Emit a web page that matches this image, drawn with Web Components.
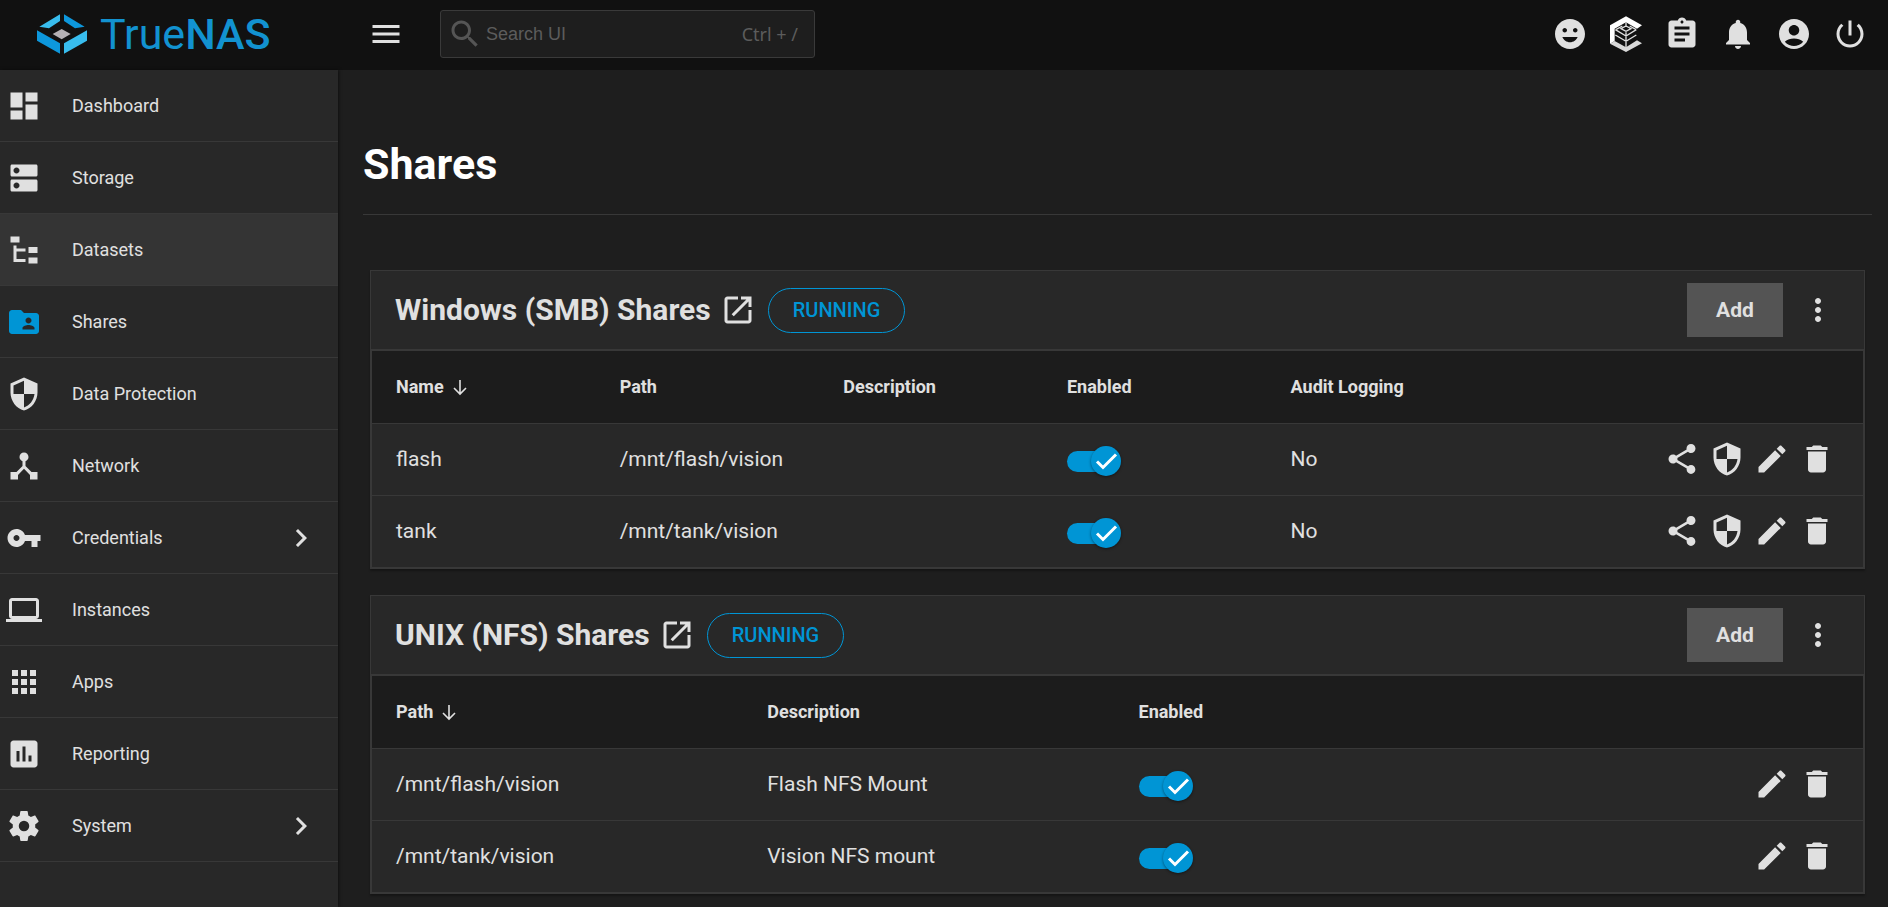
<!DOCTYPE html>
<html lang="en">
<head>
<meta charset="utf-8">
<meta name="viewport" content="width=device-width, initial-scale=1">
<title>TrueNAS - Shares</title>
<style>
  :root {
    --bg: #1e1e1e;
    --bg-dark: #111111;
    --panel: #282828;
    --line: #383838;
    --fg: #e0e0e0;
    --primary: #0095d5;
  }
  body {
    margin: 0;
    background: var(--bg);
    color: var(--fg);
    font-family: Roboto, "Noto Sans", sans-serif;
  }
</style>
</head>
<body>
<nas-app>
  <nas-topbar slot="top"></nas-topbar>
  <nas-sidebar slot="side">
    <nas-nav-item icon="dashboard">Dashboard</nas-nav-item>
    <nas-nav-item icon="storage">Storage</nas-nav-item>
    <nas-nav-item icon="tree" highlighted>Datasets</nas-nav-item>
    <nas-nav-item icon="shares" active>Shares</nas-nav-item>
    <nas-nav-item icon="shield">Data Protection</nas-nav-item>
    <nas-nav-item icon="network">Network</nas-nav-item>
    <nas-nav-item icon="key" expandable>Credentials</nas-nav-item>
    <nas-nav-item icon="laptop">Instances</nas-nav-item>
    <nas-nav-item icon="apps">Apps</nas-nav-item>
    <nas-nav-item icon="report">Reporting</nas-nav-item>
    <nas-nav-item icon="gear" expandable>System</nas-nav-item>
  </nas-sidebar>
  <nas-page-header>Shares</nas-page-header>
  <nas-share-card status="RUNNING">
    <span slot="heading">Windows (SMB) Shares</span>
    <nas-share-table kind="smb"></nas-share-table>
  </nas-share-card>
  <nas-share-card status="RUNNING">
    <span slot="heading">UNIX (NFS) Shares</span>
    <nas-share-table kind="nfs"></nas-share-table>
  </nas-share-card>
</nas-app>

<script>
const ICONS = {
  menu: 'M3 18h18v-2H3v2zm0-5h18v-2H3v2zm0-7v2h18V6H3z',
  search: 'M15.5 14h-.79l-.28-.27C15.41 12.59 16 11.11 16 9.5 16 5.91 13.09 3 9.5 3S3 5.91 3 9.5 5.91 16 9.5 16c1.61 0 3.09-.59 4.23-1.57l.27.28v.79l5 4.99L20.49 19l-4.99-5zm-6 0C7.01 14 5 11.99 5 9.5S7.01 5 9.5 5 14 7.01 14 9.5 11.99 14 9.5 14z',
  smile: 'M12 2C6.47 2 2 6.47 2 12s4.47 10 10 10 10-4.48 10-10S17.52 2 12 2zm3.5 6c.83 0 1.5.67 1.5 1.5s-.67 1.5-1.5 1.5-1.5-.67-1.5-1.5.67-1.5 1.5-1.5zm-7 0c.83 0 1.5.67 1.5 1.5S9.33 11 8.5 11 7 10.33 7 9.5 7.67 8 8.5 8zm3.5 9.5c-2.33 0-4.31-1.46-5.11-3.5h10.22c-.8 2.04-2.78 3.5-5.11 3.5z',
  clipboard: 'M19 3h-4.18C14.4 1.84 13.3 1 12 1c-1.3 0-2.4.84-2.82 2H5c-1.1 0-2 .9-2 2v14c0 1.1.9 2 2 2h14c1.1 0 2-.9 2-2V5c0-1.1-.9-2-2-2zm-7 0c.55 0 1 .45 1 1s-.45 1-1 1-1-.45-1-1 .45-1 1-1zm2 14H7v-2h7v2zm3-4H7v-2h10v2zm0-4H7V7h10v2z',
  bell: 'M12 22c1.1 0 2-.9 2-2h-4c0 1.1.89 2 2 2zm6-6v-5c0-3.07-1.64-5.64-4.5-6.32V4c0-.83-.67-1.5-1.5-1.5s-1.5.67-1.5 1.5v.68C7.63 5.36 6 7.92 6 11v5l-2 2v1h16v-1l-2-2z',
  account: 'M12 2C6.48 2 2 6.48 2 12s4.48 10 10 10 10-4.48 10-10S17.52 2 12 2zm0 4c1.93 0 3.5 1.57 3.5 3.5S13.93 13 12 13s-3.5-1.57-3.5-3.5S10.07 6 12 6zm0 14c-2.03 0-4.43-.82-6.14-2.88C7.55 15.8 9.68 15 12 15s4.45.8 6.14 2.12C16.43 19.18 14.03 20 12 20z',
  power: 'M13 3h-2v10h2V3zm4.83 2.17l-1.42 1.42C17.99 7.86 19 9.81 19 12c0 3.87-3.13 7-7 7s-7-3.13-7-7c0-2.19 1.01-4.14 2.58-5.42L6.17 5.17C4.23 6.82 3 9.26 3 12c0 4.97 4.03 9 9 9s9-4.03 9-9c0-2.74-1.23-5.18-3.17-6.83z',
  dashboard: 'M3 13h8V3H3v10zm0 8h8v-6H3v6zm10 0h8V11h-8v10zm0-18v6h8V3h-8z',
  storage: 'M20 13H4c-.55 0-1 .45-1 1v6c0 .55.45 1 1 1h16c.55 0 1-.45 1-1v-6c0-.55-.45-1-1-1zM7 19c-1.1 0-2-.9-2-2s.9-2 2-2 2 .9 2 2-.9 2-2 2zM20 3H4c-.55 0-1 .45-1 1v6c0 .55.45 1 1 1h16c.55 0 1-.45 1-1V4c0-.55-.45-1-1-1zM7 9c-1.1 0-2-.9-2-2s.9-2 2-2 2 .9 2 2-.9 2-2 2z',
  tree: 'M3 3h6v4H3zM15 10h6v4h-6zM15 17h6v4h-6zM13 13H7v5h6v2H5V9h2v2h6z',
  shares: 'M20 6h-8l-2-2H4c-1.1 0-1.99.9-1.99 2L2 18c0 1.1.9 2 2 2h16c1.1 0 2-.9 2-2V8c0-1.1-.9-2-2-2zm-5 3c1.1 0 2 .9 2 2s-.9 2-2 2-2-.9-2-2 .9-2 2-2zm4 8h-8v-1c0-1.33 2.67-2 4-2s4 .67 4 2v1z',
  shield: 'M12 1L3 5v6c0 5.55 3.84 10.74 9 12 5.16-1.26 9-6.45 9-12V5l-9-4zm0 10.99h7c-.53 4.12-3.28 7.79-7 8.94V12H5V6.3l7-3.11v8.8z',
  network: 'M17 16l-4-4V8.82C14.16 8.4 15 7.3 15 6c0-1.66-1.34-3-3-3S9 4.34 9 6c0 1.3.84 2.4 2 2.82V12l-4 4H3v5h5v-3.05l4-4.2 4 4.2V21h5v-5h-4z',
  key: 'M12.65 10C11.83 7.67 9.61 6 7 6c-3.31 0-6 2.69-6 6s2.69 6 6 6c2.61 0 4.83-1.67 5.65-4H17v4h4v-4h2v-4H12.65zM7 14c-1.1 0-2-.9-2-2s.9-2 2-2 2 .9 2 2-.9 2-2 2z',
  laptop: 'M20 18c1.1 0 1.99-.9 1.99-2L22 6c0-1.1-.9-2-2-2H4c-1.1 0-2 .9-2 2v10c0 1.1.9 2 2 2H0v2h24v-2h-4zM4 6h16v10H4V6z',
  apps: 'M4 8h4V4H4v4zm6 12h4v-4h-4v4zm-6 0h4v-4H4v4zm0-6h4v-4H4v4zm6 0h4v-4h-4v4zm6-10v4h4V4h-4zm-6 4h4V4h-4v4zm6 6h4v-4h-4v4zm0 6h4v-4h-4v4z',
  report: 'M19 3H5c-1.1 0-2 .9-2 2v14c0 1.1.9 2 2 2h14c1.1 0 2-.9 2-2V5c0-1.1-.9-2-2-2zM9 17H7v-7h2v7zm4 0h-2V7h2v10zm4 0h-2v-4h2v4z',
  gear: 'M12 15.5A3.5 3.5 0 0 1 8.5 12 3.5 3.5 0 0 1 12 8.5a3.5 3.5 0 0 1 3.5 3.5 3.5 3.5 0 0 1-3.5 3.5m7.43-2.53c.04-.32.07-.64.07-.97s-.03-.66-.07-1l2.11-1.63c.19-.15.24-.42.12-.64l-2-3.46c-.12-.22-.39-.31-.61-.22l-2.49 1c-.52-.39-1.06-.73-1.69-.98l-.37-2.65A.506.506 0 0 0 14 2h-4c-.25 0-.46.18-.5.42l-.37 2.65c-.63.25-1.17.59-1.69.98l-2.49-1c-.22-.09-.49 0-.61.22l-2 3.46c-.13.22-.07.49.12.64L4.57 11c-.04.34-.07.67-.07 1s.03.65.07.97l-2.11 1.66c-.19.15-.25.42-.12.64l2 3.46c.12.22.39.3.61.22l2.49-1.01c.52.4 1.06.74 1.69.99l.37 2.65c.04.24.25.42.5.42h4c.25 0 .46-.18.5-.42l.37-2.65c.63-.26 1.17-.59 1.69-.99l2.49 1.01c.22.08.49 0 .61-.22l2-3.46c.12-.22.07-.49-.12-.64l-2.11-1.66z',
  chevron: 'M10 6L8.59 7.41 13.17 12l-4.58 4.59L10 18l6-6z',
  open: 'M19 19H5V5h7V3H5c-1.11 0-2 .9-2 2v14c0 1.1.89 2 2 2h14c1.1 0 2-.9 2-2v-7h-2v7zM14 3v2h3.59l-9.83 9.83 1.41 1.41L19 6.41V10h2V3h-7z',
  kebab: 'M12 8c1.1 0 2-.9 2-2s-.9-2-2-2-2 .9-2 2 .9 2 2 2zm0 2c-1.1 0-2 .9-2 2s.9 2 2 2 2-.9 2-2-.9-2-2-2zm0 6c-1.1 0-2 .9-2 2s.9 2 2 2 2-.9 2-2-.9-2-2-2z',
  share: 'M18 16.08c-.76 0-1.44.3-1.96.77L8.91 12.7c.05-.23.09-.46.09-.7s-.04-.47-.09-.7l7.05-4.11c.54.5 1.25.81 2.04.81 1.66 0 3-1.34 3-3s-1.34-3-3-3-3 1.34-3 3c0 .24.04.47.09.7L8.04 9.81C7.5 9.31 6.79 9 6 9c-1.66 0-3 1.34-3 3s1.34 3 3 3c.79 0 1.5-.31 2.04-.81l7.12 4.16c-.05.21-.08.43-.08.65 0 1.61 1.31 2.92 2.92 2.92s2.92-1.31 2.92-2.92-1.31-2.92-2.92-2.92z',
  edit: 'M3 17.25V21h3.75L17.81 9.94l-3.75-3.75L3 17.25zM20.71 7.04c.39-.39.39-1.02 0-1.41l-2.34-2.34c-.39-.39-1.02-.39-1.41 0l-1.83 1.83 3.75 3.75 1.83-1.83z',
  trash: 'M6 19c0 1.1.9 2 2 2h8c1.1 0 2-.9 2-2V7H6v12zM19 4h-3.5l-1-1h-5l-1 1H5v2h14V4z'
};

/* Attaches an open shadow root holding the given markup. */
function render(el, html) {
  const t = document.createElement('template');
  t.innerHTML = html;
  el.attachShadow({ mode: 'open' }).append(t.content.cloneNode(true));
}

class NasIcon extends HTMLElement {
  connectedCallback() {
    if (this.shadowRoot) return;
    render(this, `<style>
      :host { display: block; width: 36px; height: 36px; flex: none; }
      svg { display: block; width: 100%; height: 100%; fill: currentColor; }
    </style><svg viewBox="0 0 24 24" aria-hidden="true"><path d="${ICONS[this.getAttribute('name')]}"/></svg>`);
  }
}

class NasApp extends HTMLElement {
  connectedCallback() {
    render(this, `<style>
      :host { display: grid; grid-template-columns: 338px minmax(0, 1fr); grid-template-rows: auto 1fr; min-height: 100vh; }
      header { grid-column: 1 / -1; }
      aside { background: var(--panel); box-shadow: 1px 0 3px rgba(0, 0, 0, .5); }
      main { padding: 0 16px 12px 25px; display: flex; flex-direction: column; gap: 26px; }
    </style>
    <header><slot name="top"></slot></header>
    <aside><slot name="side"></slot></aside>
    <main><slot></slot></main>`);
  }
}

class NasLogo extends HTMLElement {
  connectedCallback() {
    render(this, `<style>
      :host { display: block; }
      a { display: flex; align-items: center; gap: 12px; color: #1292d0; text-decoration: none; font-size: 43px; line-height: 48px; font-weight: 400; }
      b { font-weight: 500; }
      svg { display: block; width: 52px; height: 42px; }
    </style>
    <a href="#dashboard">
      <svg viewBox="108 38 156 126" aria-hidden="true">
        <path fill="#38bdee" d="M180 42V62L147 84 118 79ZM261 90V121L192 160V129Z"/>
        <path fill="#0d97dc" d="M192 42L254 79 225 84 192 62ZM111 90L180 129V160L111 121Z"/>
        <path fill="#b5b1b4" d="M158 101L185 86 212 101 185 117Z"/>
      </svg>
      <span>True<b>NAS</b></span>
    </a>`);
  }
}

class NasTopbar extends HTMLElement {
  connectedCallback() {
    const btn = (name, label) => `<button type="button" aria-label="${label}"><nas-icon name="${name}"></nas-icon></button>`;
    render(this, `<style>
      :host { display: flex; align-items: center; box-sizing: border-box; height: 70px; background: var(--bg-dark); padding: 0 10px 2px 0; }
      nas-logo { width: 303px; padding-left: 36px; }
      button { display: grid; place-items: center; width: 56px; height: 56px; padding: 0; border: 0; background: none; color: var(--fg); }
      .menu { width: 94px; }
      .search { display: flex; align-items: center; box-sizing: border-box; width: 375px; height: 48px; margin-left: 7px; padding: 0 16px 0 6px; border: 1px solid #3a3a3a; border-radius: 3px; background: var(--bg); color: #555; }
      input { flex: 1; min-width: 0; margin-left: 3px; padding: 0; border: 0; outline: 0; background: none; color: var(--fg); font: 18px/24px "Liberation Sans", sans-serif; }
      input::placeholder { color: #5c5c5c; opacity: 1; }
      kbd { color: #5c5c5c; font: 18px/24px "Noto Sans", sans-serif; }
      .actions { display: flex; margin-left: auto; }
      .brand { width: 36px; height: 40px; display: block; }
    </style>
    <nas-logo></nas-logo>
    <button type="button" class="menu" aria-label="Toggle navigation"><nas-icon name="menu"></nas-icon></button>
    <label class="search"><nas-icon name="search"></nas-icon><input type="text" placeholder="Search UI" aria-label="Search UI"><kbd>Ctrl + /</kbd></label>
    <div class="actions">
      ${btn('smile', 'Feedback')}
      <button type="button" aria-label="TrueCommand">
        <svg class="brand" viewBox="9 29 108 120" aria-hidden="true">
          <path fill="#fff" d="M63 36L111 63 96 73 63 54 29 73V110L15 118V63Z"/>
          <path fill="#d8d8d8" d="M15 118L29 110 63 129 96 108 111 117 63 143Z"/>
          <path fill="none" stroke="#e0e0e0" stroke-width="4" d="M63 54V68M63 84V130M34 75L52 65M74 65L92 75M48 73L63 65 78 73 63 81ZM31 76L63 95 94 76M31 92L63 111 94 92"/>
        </svg>
      </button>
      ${btn('clipboard', 'Jobs')}${btn('bell', 'Alerts')}${btn('account', 'Account')}${btn('power', 'Power')}
    </div>`);
  }
}

class NasSidebar extends HTMLElement {
  connectedCallback() {
    render(this, `<style>:host { display: block; } nav { display: flex; flex-direction: column; }</style><nav aria-label="Main"><slot></slot></nav>`);
  }
}

class NasNavItem extends HTMLElement {
  connectedCallback() {
    render(this, `<style>
      :host { display: block; }
      a { display: flex; align-items: center; gap: 30px; box-sizing: border-box; height: 72px; padding: 0 19px 0 6px; border-bottom: 1px solid var(--line); color: var(--fg); text-decoration: none; font-size: 18px; line-height: 24px; }
      :host([highlighted]) a { background: #343434; }
      :host([active]) .lead { color: var(--primary); }
      .more { margin-left: auto; }
    </style>
    <a href="#${this.getAttribute('icon')}"><nas-icon class="lead" name="${this.getAttribute('icon')}"></nas-icon><span><slot></slot></span>${this.hasAttribute('expandable') ? '<nas-icon class="more" name="chevron"></nas-icon>' : ''}</a>`);
  }
}

class NasPageHeader extends HTMLElement {
  connectedCallback() {
    render(this, `<style>
      :host { display: block; padding: 70px 0 26px; margin-bottom: 29px; border-bottom: 1px solid var(--line); }
      h1 { margin: 0; color: #fff; font-size: 43px; line-height: 48px; font-weight: 700; }
    </style><h1><slot></slot></h1>`);
  }
}

class NasShareCard extends HTMLElement {
  connectedCallback() {
    render(this, `<style>
      :host { display: block; margin: 0 7px; border: 1px solid var(--line); background: var(--panel); box-shadow: 0 2px 2px rgba(0, 0, 0, .3); }
      header { display: flex; align-items: center; height: 78px; padding: 0 19px 0 24px; border-bottom: 1px solid var(--line); }
      h2 { margin: 0; font-size: 30px; line-height: 36px; font-weight: 700; }
      a { display: flex; align-items: center; gap: 9px; color: inherit; text-decoration: none; }
      .status { box-sizing: border-box; height: 45px; margin-left: 12px; padding: 0 24px; border: 1px solid var(--primary); border-radius: 24px; color: var(--primary); font-size: 20px; line-height: 43px; font-weight: 500; }
      .buttons { display: flex; gap: 8px; margin-left: auto; }
      button { display: grid; place-items: center; height: 54px; padding: 0; border: 0; color: var(--fg); background: none; font: 700 21px/24px Roboto, sans-serif; }
      .add { width: 96px; background: #545454; }
      .more { width: 54px; }
    </style>
    <header>
      <h2><a href="#share"><slot name="heading"></slot><nas-icon name="open"></nas-icon></a></h2>
      <span class="status">${this.getAttribute('status')}</span>
      <div class="buttons">
        <button type="button" class="add">Add</button>
        <button type="button" class="more" aria-label="More options"><nas-icon name="kebab"></nas-icon></button>
      </div>
    </header>
    <slot></slot>`);
  }
}

class NasToggle extends HTMLElement {
  connectedCallback() {
    render(this, `<style>
      :host { display: block; padding-top: 5px; }
      label { display: grid; width: 54px; height: 30px; align-items: center; }
      input { grid-area: 1 / 1; appearance: none; width: 52px; height: 21px; margin: 0; border-radius: 11px; background: #555; }
      input:checked { background: var(--primary); }
      svg { grid-area: 1 / 1; justify-self: end; width: 30px; height: 30px; border-radius: 50%; background: var(--primary); box-shadow: 0 1px 3px rgba(0, 0, 0, .45); z-index: 1; }
    </style>
    <label><input type="checkbox" checked aria-label="Enabled"><svg viewBox="0 0 30 30" aria-hidden="true"><path d="M6 15.500L12 21.500 25 8.500" fill="none" stroke="#fff" stroke-width="3"/></svg></label>`);
  }
}

const SHARES = {
  smb: {
    width: '15%',
    columns: ['Name', 'Path', 'Description', 'Enabled', 'Audit Logging'],
    rows: [['flash', '/mnt/flash/vision', '', true, 'No'], ['tank', '/mnt/tank/vision', '', true, 'No']],
    actions: [['share', 'Share ACL'], ['shield', 'Filesystem ACL'], ['edit', 'Edit'], ['trash', 'Delete']]
  },
  nfs: {
    width: '24.9%',
    columns: ['Path', 'Description', 'Enabled'],
    rows: [['/mnt/flash/vision', 'Flash NFS Mount', true], ['/mnt/tank/vision', 'Vision NFS mount', true]],
    actions: [['edit', 'Edit'], ['trash', 'Delete']]
  }
};

class NasShareTable extends HTMLElement {
  connectedCallback() {
    const d = SHARES[this.getAttribute('kind')];
    const arrow = '<svg viewBox="0 0 16 18" aria-hidden="true"><path d="M8 2V16M2 10L8 16 14 10" fill="none" stroke="currentColor" stroke-width="1.600"/></svg>';
    const head = d.columns.map((c, i) => `<th scope="col">${i ? c : `<span class="sort">${c}${arrow}</span>`}</th>`).join('');
    const acts = d.actions.map(([n, l]) => `<button type="button" aria-label="${l}"><nas-icon name="${n}"></nas-icon></button>`).join('');
    const body = d.rows.map(r => `<tr>${r.map(c => `<td>${c === true ? '<nas-toggle></nas-toggle>' : c}</td>`).join('')}<td><div class="actions">${acts}</div></td></tr>`).join('');
    render(this, `<style>
      :host { display: block; border: 1px solid var(--line); }
      table { width: 100%; table-layout: fixed; border-collapse: separate; border-spacing: 0; }
      col.data { width: ${d.width}; }
      th, td { box-sizing: border-box; height: 72px; padding: 0 0 2px 24px; text-align: left; vertical-align: middle; border-bottom: 1px solid var(--line); }
      th { height: 73px; padding-bottom: 0; background: #1c1c1c; font-size: 18px; line-height: 24px; font-weight: 700; }
      td { font-size: 21px; line-height: 24px; }
      tbody tr:last-child td { height: 71px; border-bottom: 0; }
      .sort { display: flex; align-items: center; gap: 8px; }
      .sort svg { width: 16px; height: 18px; }
      .actions { display: flex; justify-content: flex-end; padding-right: 24px; }
      button { display: grid; place-items: center; width: 45px; height: 45px; padding: 0; border: 0; background: none; color: var(--fg); }
    </style>
    <table>
      <colgroup>${d.columns.map(() => '<col class="data">').join('')}<col></colgroup>
      <thead><tr>${head}<th></th></tr></thead>
      <tbody>${body}</tbody>
    </table>`);
  }
}

customElements.define('nas-icon', NasIcon);
customElements.define('nas-app', NasApp);
customElements.define('nas-logo', NasLogo);
customElements.define('nas-topbar', NasTopbar);
customElements.define('nas-sidebar', NasSidebar);
customElements.define('nas-nav-item', NasNavItem);
customElements.define('nas-page-header', NasPageHeader);
customElements.define('nas-share-card', NasShareCard);
customElements.define('nas-toggle', NasToggle);
customElements.define('nas-share-table', NasShareTable);
</script>
</body>
</html>
